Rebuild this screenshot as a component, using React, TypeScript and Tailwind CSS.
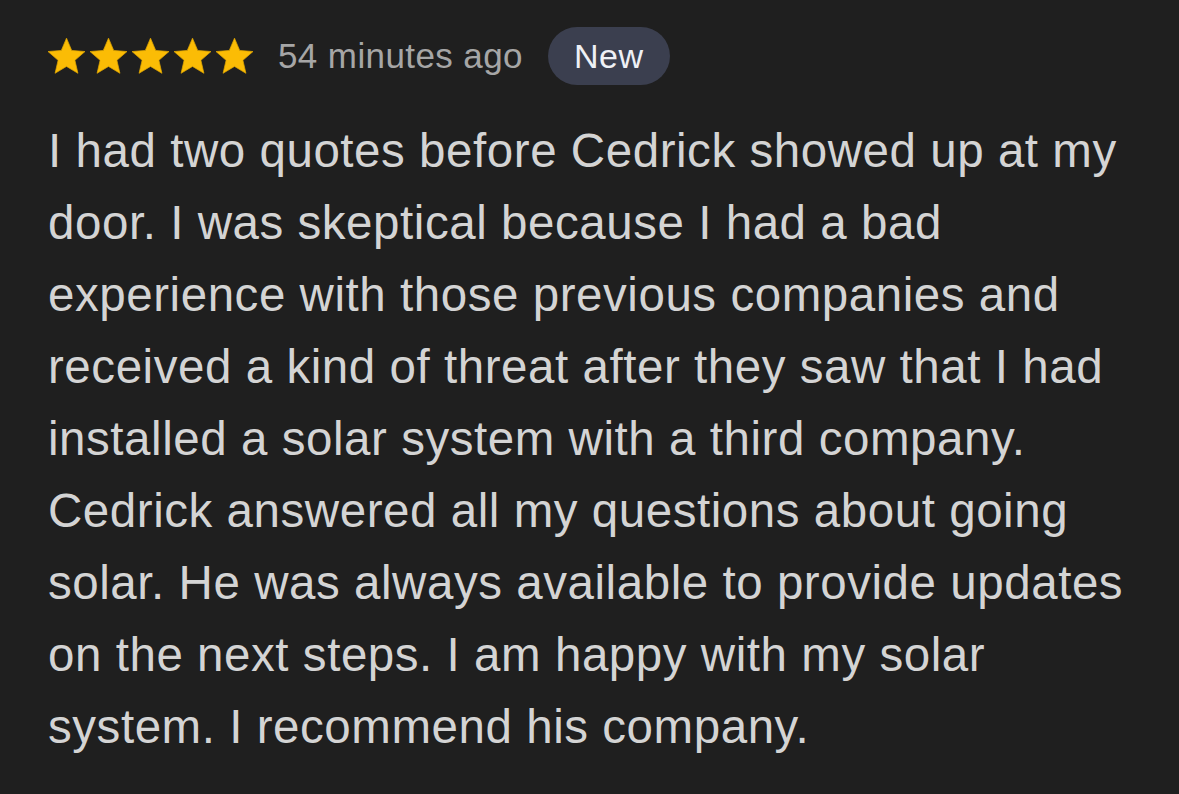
const LINES = [
  'I had two quotes before Cedrick showed up at my',
  'door. I was skeptical because I had a bad',
  'experience with those previous companies and',
  'received a kind of threat after they saw that I had',
  'installed a solar system with a third company.',
  'Cedrick answered all my questions about going',
  'solar. He was always available to provide updates',
  'on the next steps. I am happy with my solar',
  'system. I recommend his company.',
];

function Star() {
  return (
    <svg viewBox="2 2 20 19.3" className="h-[36px] w-[37px]" fill="#fbbc05" stroke="#e0a500" strokeWidth="0.4" strokeLinejoin="round">
      <path d="M12 17.27L18.18 21l-1.64-7.03L22 9.24l-7.19-.61L12 2 9.19 8.63 2 9.24l5.46 4.73L5.82 21z" />
    </svg>
  );
}

export default function App() {
  return (
    <div className="h-[794px] w-[1179px] overflow-hidden bg-[#1f1f1f] font-['Liberation_Sans',Arial,sans-serif]">
      <div className="px-[48px] pt-[27px]">
        <div className="flex h-[58px] items-center">
          <div className="flex items-center gap-[5px]">
            {[0, 1, 2, 3, 4].map((i) => (
              <Star key={i} />
            ))}
          </div>
          <span className="ml-[25px] text-[35px] tracking-[0.4px] text-[#a6a6a6]">54 minutes ago</span>
          <span className="ml-[25px] flex h-[58px] items-center rounded-full bg-[#3b3f4f] px-[26px] text-[34px] tracking-[0.6px] text-[#eef0f5]">
            New
          </span>
        </div>
        <p className="mt-[30px] text-[47.5px] leading-[72px] tracking-[0.55px] text-[#d4d4d4]">
          {LINES.map((line) => (
            <span key={line} className="block whitespace-nowrap">
              {line}
            </span>
          ))}
        </p>
      </div>
    </div>
  );
}
